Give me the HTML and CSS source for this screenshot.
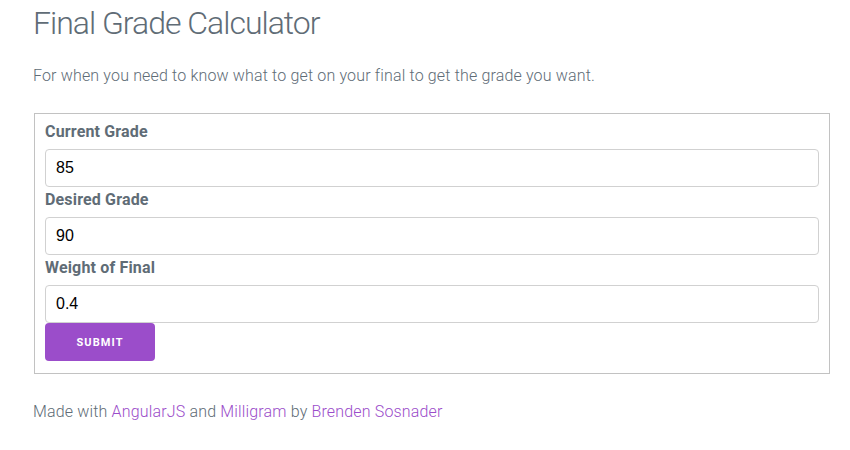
FILE: index.html
```html
<!DOCTYPE html>
<html>
<head>
<meta charset="utf-8">
<link rel="stylesheet" href="styles.css">
</head>
<body>
<div class="container">
  <h1 class="title">Final Grade Calculator</h1>
  <p class="lead">For when you need to know what to get on your final to get the grade you want.</p>
  <form class="calc">
    <label class="field-label">Current Grade</label>
    <input class="field" type="text" value="85">
    <label class="field-label">Desired Grade</label>
    <input class="field" type="text" value="90">
    <label class="field-label">Weight of Final</label>
    <input class="field" type="text" value="0.4">
    <button class="submit" type="button">Submit</button>
  </form>
  <p class="footer">Made with <a href="#">AngularJS</a> and <a href="#">Milligram</a> by <a href="#">Brenden Sosnader</a></p>
</div>
</body>
</html>
```
FILE: styles.css
```css
html, body {
  margin: 0;
  padding: 0;
  background: #fff;
}
body {
  font-family: Roboto, "Helvetica Neue", Arial, sans-serif;
  font-weight: 300;
  font-size: 16px;
  line-height: 1.6;
  letter-spacing: 0.01em;
  color: #606c76;
}
.container {
  padding: 0 20px 0 33px;
}
.title {
  margin: 4px 0 0;
  font-size: 32px;
  font-weight: 300;
  line-height: 1.2;
  letter-spacing: -1px;
}
.lead {
  margin: 21px 0 0;
}
.calc {
  margin: 24px 0 0 1px;
  border: 1px solid #c2c2c2;
  padding: 5px 10px 12px;
  display: flex;
  flex-direction: column;
  align-items: stretch;
}
.field-label {
  display: block;
  font-weight: 700;
  line-height: 25px;
  margin-bottom: 5px;
}
.field {
  box-sizing: border-box;
  height: 38px;
  border: 1px solid #d1d1d1;
  border-radius: 4px;
  padding: 6px 10px;
  font-family: "Liberation Sans", Arial, sans-serif;
  font-size: 16px;
  letter-spacing: 0;
  color: #000;
  background: transparent;
  outline: none;
  margin: 0;
}
.submit {
  align-self: flex-start;
  box-sizing: border-box;
  height: 38px;
  width: 110px;
  padding: 2px 0 0;
  border: none;
  border-radius: 4px;
  background: #9b4dca;
  color: #fff;
  font-family: Roboto, sans-serif;
  font-size: 11px;
  font-weight: 700;
  letter-spacing: 1.1px;
  text-transform: uppercase;
  cursor: pointer;
}
.footer {
  margin: 25px 0 0;
}
.footer a {
  color: #9b4dca;
  text-decoration: none;
}
```
